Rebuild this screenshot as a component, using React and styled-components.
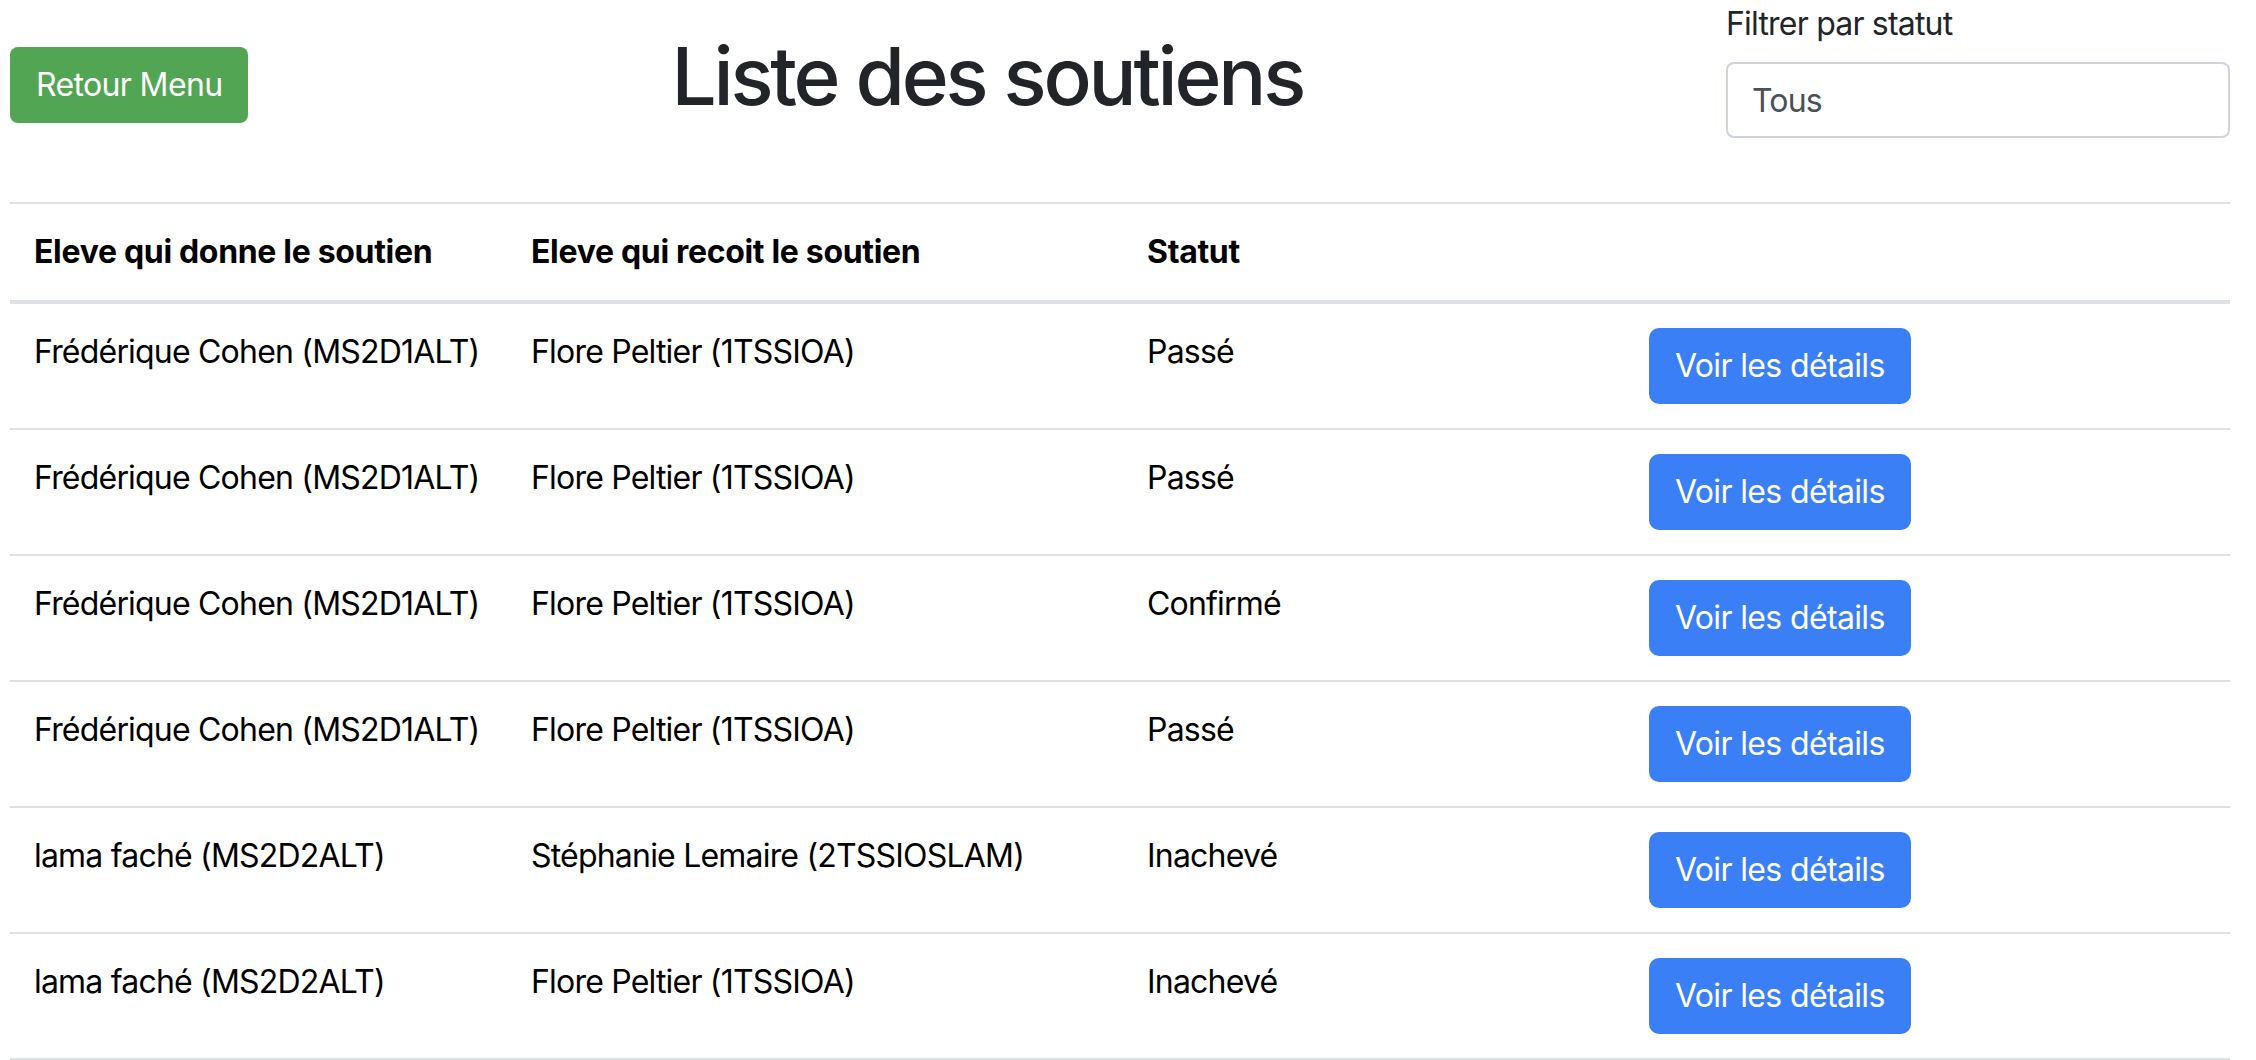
import React from "react";
import styled, { createGlobalStyle } from "styled-components";

const GlobalStyle = createGlobalStyle`
  html, body {
    margin: 0;
    padding: 0;
    background: #fff;
  }
  body {
    font-family: Inter, "Liberation Sans", Arial, sans-serif;
    font-size: 32px;
    line-height: 1.5;
    color: #212529;
    letter-spacing: -0.025em;
  }
`;

const soutiens = [
  { donneur: "Frédérique Cohen (MS2D1ALT)", receveur: "Flore Peltier (1TSSIOA)", statut: "Passé" },
  { donneur: "Frédérique Cohen (MS2D1ALT)", receveur: "Flore Peltier (1TSSIOA)", statut: "Passé" },
  { donneur: "Frédérique Cohen (MS2D1ALT)", receveur: "Flore Peltier (1TSSIOA)", statut: "Confirmé" },
  { donneur: "Frédérique Cohen (MS2D1ALT)", receveur: "Flore Peltier (1TSSIOA)", statut: "Passé" },
  { donneur: "lama faché (MS2D2ALT)", receveur: "Stéphanie Lemaire (2TSSIOSLAM)", statut: "Inachevé" },
  { donneur: "lama faché (MS2D2ALT)", receveur: "Flore Peltier (1TSSIOA)", statut: "Inachevé" },
];

const ListeSoutiens = () => (
  <Page>
    <GlobalStyle />
    <Header>
      <Button $variant="success">Retour Menu</Button>
      <Title>Liste des soutiens</Title>
      <FilterGroup>
        <Label htmlFor="statut">Filtrer par statut</Label>
        <Select id="statut" defaultValue="tous">
          <option value="tous">Tous</option>
          <option value="passe">Passé</option>
          <option value="confirme">Confirmé</option>
          <option value="inacheve">Inachevé</option>
        </Select>
      </FilterGroup>
    </Header>

    <Table>
      <colgroup>
        <Col $w={497} />
        <Col $w={616} />
        <Col $w={502} />
        <Col $w={605} />
      </colgroup>
      <thead>
        <tr>
          <Th>Eleve qui donne le soutien</Th>
          <Th>Eleve qui recoit le soutien</Th>
          <Th>Statut</Th>
          <Th></Th>
        </tr>
      </thead>
      <tbody>
        {soutiens.map((s, i) => (
          <tr key={i}>
            <Td>{s.donneur}</Td>
            <Td>{s.receveur}</Td>
            <Td>{s.statut}</Td>
            <Td>
              <Button $variant="primary">Voir les détails</Button>
            </Td>
          </tr>
        ))}
      </tbody>
    </Table>
  </Page>
);

const Page = styled.div`
  padding: 0 26px 0 10px;
`;

const Header = styled.header`
  display: flex;
  justify-content: space-between;
  align-items: center;
  margin-bottom: 32px;
`;

const Button = styled.button`
  background-color: ${(p) => (p.$variant === "success" ? "#52a552" : "#3b7ff6")};
  color: #fff;
  border: 2px solid transparent;
  border-radius: ${(p) => (p.$variant === "success" ? "8px" : "10px")};
  padding: 12px 24px;
  font-family: inherit;
  font-size: 32px;
  line-height: 48px;
  letter-spacing: -0.02em;
  cursor: pointer;
  white-space: nowrap;
`;

const Title = styled.h1`
  margin: 0 0 18px;
  font-size: 80px;
  font-weight: 500;
  line-height: 96px;
  color: #212529;
  letter-spacing: -0.04em;
`;

const FilterGroup = styled.div`
  display: flex;
  flex-direction: column;
  width: 504px;
  padding-bottom: 32px;
`;

const Label = styled.label`
  margin-bottom: 14px;
  line-height: 48px;
`;

const Select = styled.select`
  appearance: none;
  -webkit-appearance: none;
  height: 76px;
  padding: 12px 24px;
  font-family: inherit;
  font-size: 32px;
  letter-spacing: -0.025em;
  color: #495057;
  background: #fff;
  border: 2px solid #ced4da;
  border-radius: 8px;
`;

const Table = styled.table`
  width: 100%;
  table-layout: fixed;
  border-collapse: collapse;
  color: #000;

  tbody tr:last-child td {
    border-bottom: 2px solid #dee2e6;
  }
`;

const Col = styled.col`
  width: ${(p) => p.$w}px;
`;

const Th = styled.th`
  text-align: left;
  font-weight: 700;
  letter-spacing: -0.01em;
  padding: 24px;
  line-height: 48px;
  border-top: 2px solid #dee2e6;
  border-bottom: 4px solid #dee2e6;
  vertical-align: bottom;
`;

const Td = styled.td`
  padding: 24px;
  line-height: 48px;
  border-top: 2px solid #dee2e6;
  vertical-align: top;
  white-space: nowrap;
`;

export default ListeSoutiens;
